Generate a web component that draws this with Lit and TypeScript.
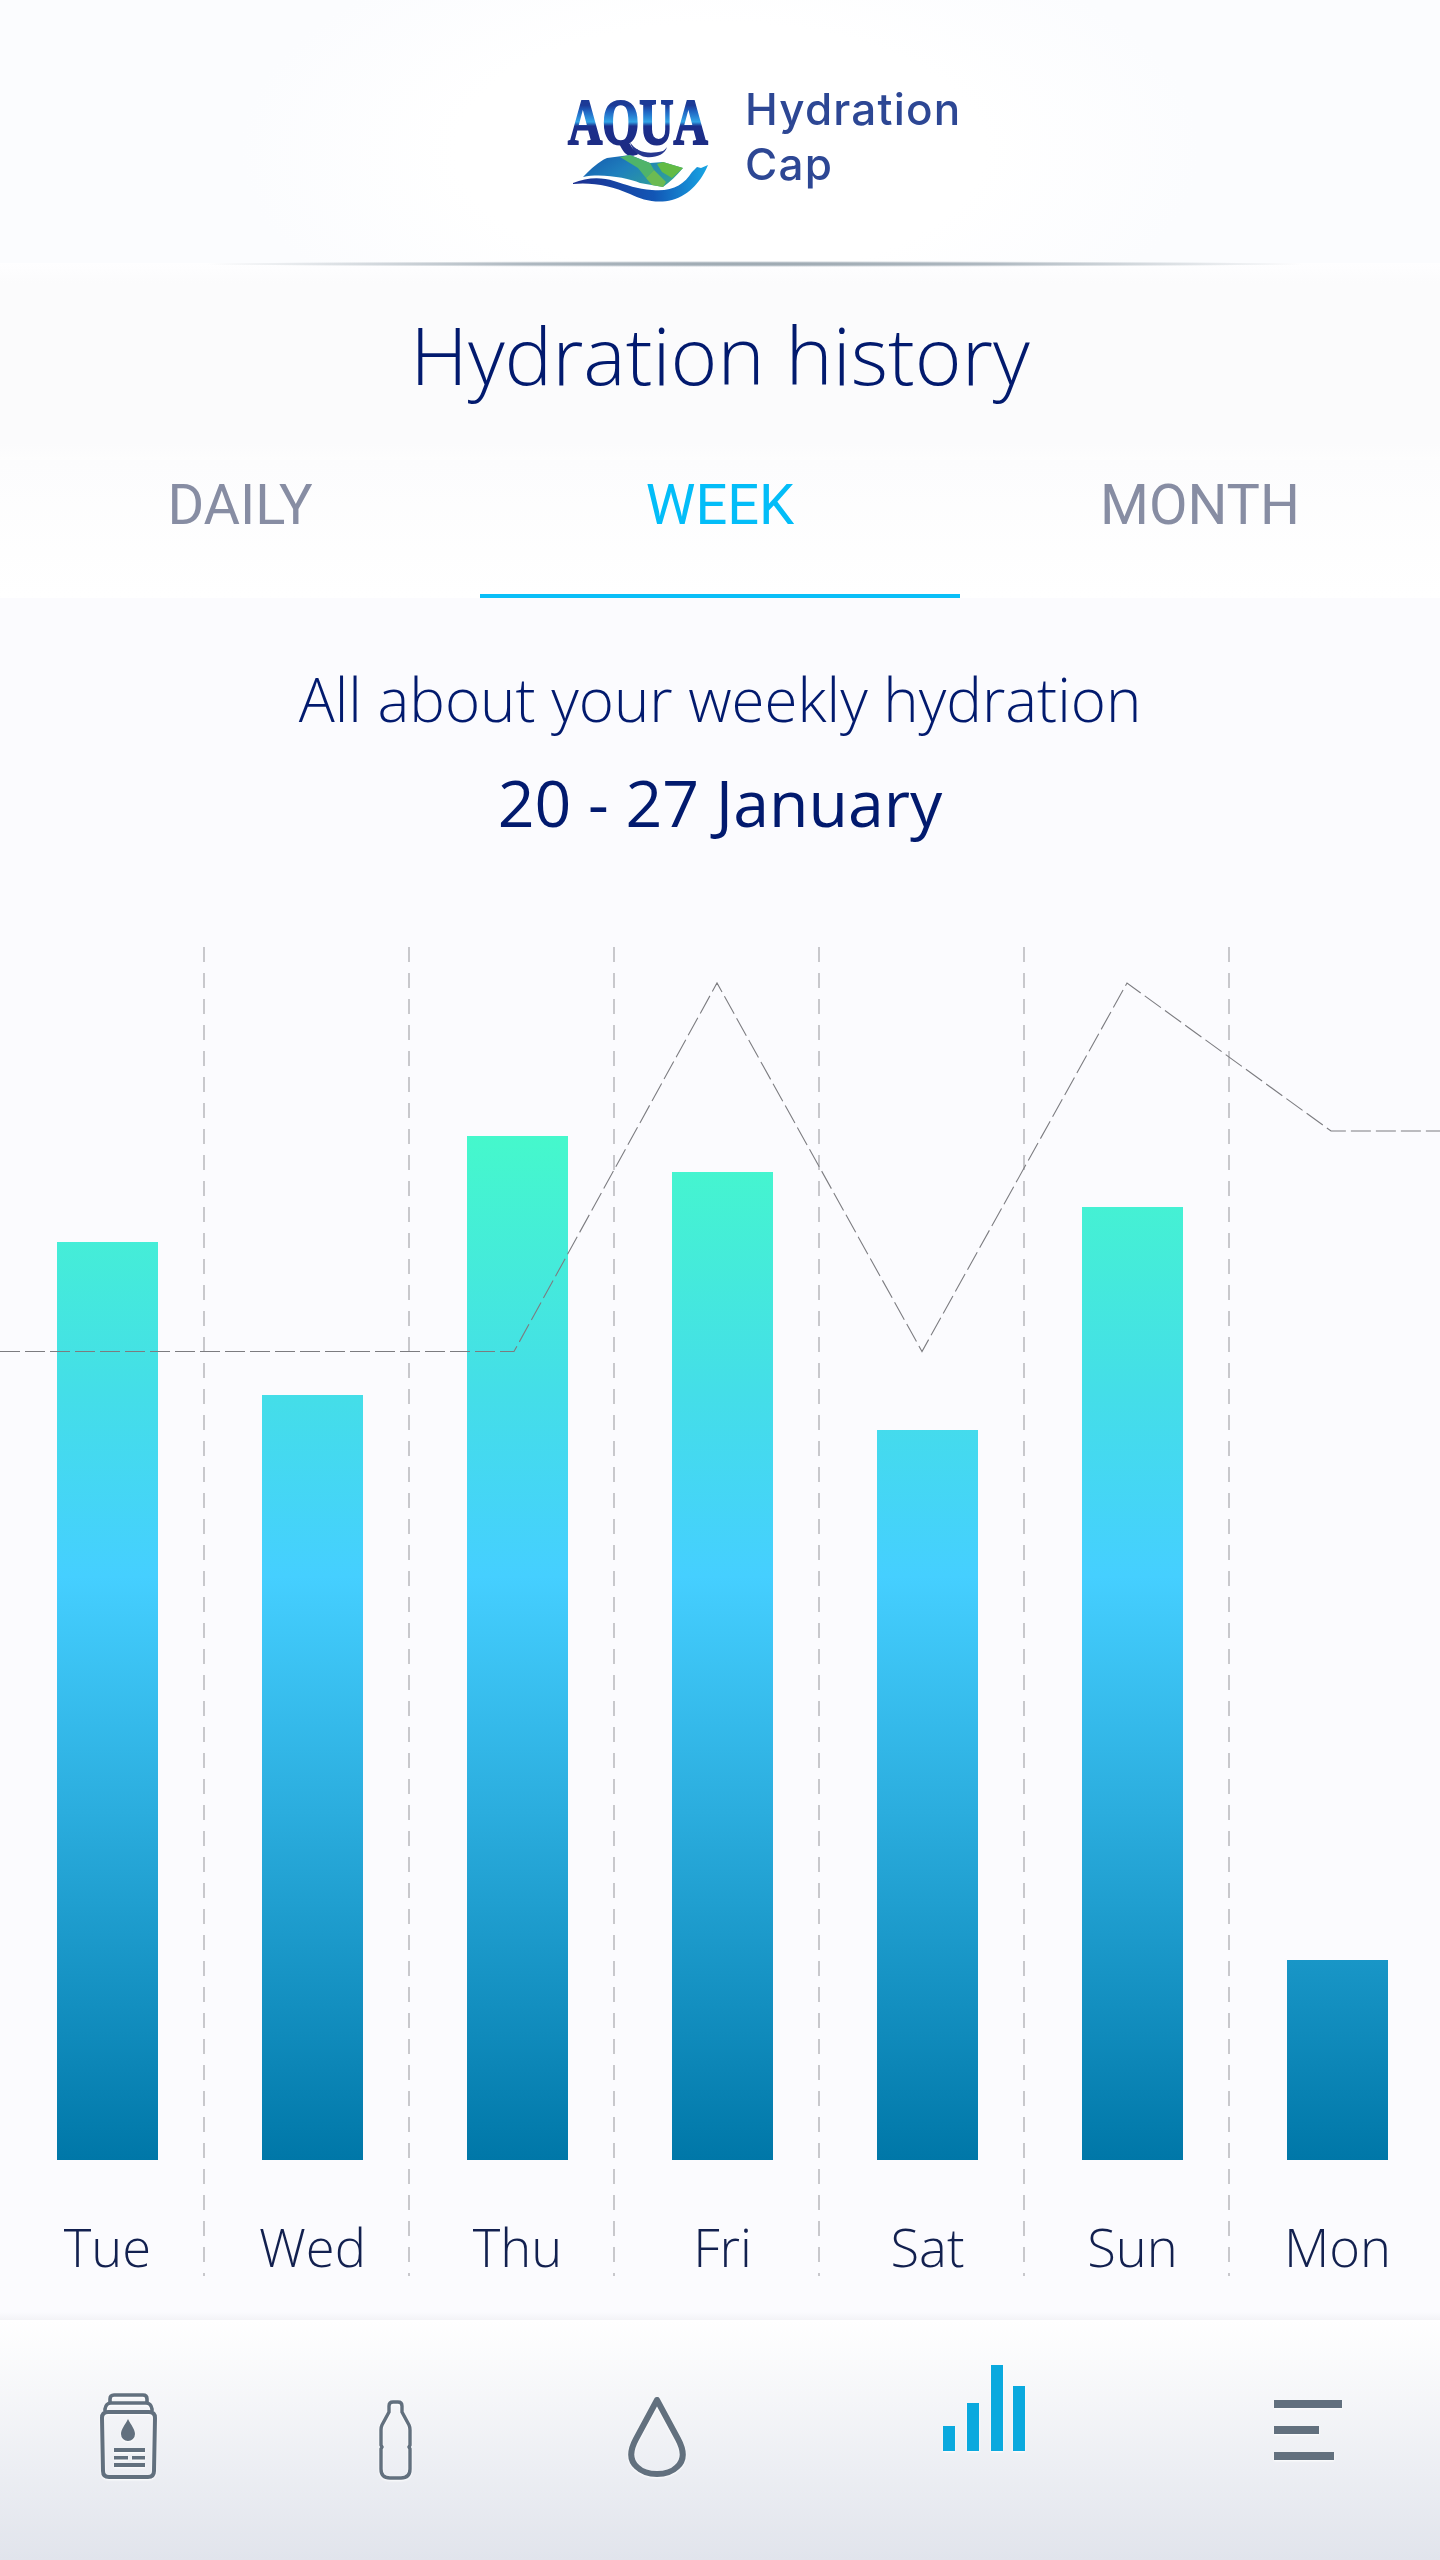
import { LitElement, html, css, svg } from "lit";
import { customElement } from "lit/decorators.js";

const BARS = [
  { d: "Tue", top: 1242 },
  { d: "Wed", top: 1395 },
  { d: "Thu", top: 1136 },
  { d: "Fri", top: 1172 },
  { d: "Sat", top: 1430 },
  { d: "Sun", top: 1207 },
  { d: "Mon", top: 1960 },
];
const BOTTOM = 2160;

@customElement("app-root")
export class AppRoot extends LitElement {
  static styles = css`
    :host { display: block; width: 1440px; height: 2560px; overflow: hidden; background: #fbfbfe; font-family: "Open Sans", sans-serif; color: #021a6e; }
    .page { display: flex; flex-direction: column; height: 2560px; }
    .header { height: 263px; box-sizing: border-box; flex: none; position: relative; display: flex; align-items: flex-start; padding: 82px 0 0 562px;
      background: radial-gradient(ellipse 480px 230px at 720px 150px, #ffffff 55%, #fbfcfe 100%); }
    .mark { margin-top: 8px; flex: none; filter: blur(0.7px); }
    .brand { margin-left: 31px; font-family: Inter, Lato, sans-serif; font-weight: 500; font-size: 44px; line-height: 55px; letter-spacing: 1.2px; color: #2d4794; filter: blur(0.4px); }
    .rule { position: absolute; left: 200px; width: 1110px; bottom: -4px; height: 6px;
      background: radial-gradient(closest-side, #98a4ac 0%, #aeb8c0 45%, rgba(200,208,214,0) 100%); }
    .title { flex: none; height: 197px; margin: 0; display: flex; justify-content: center; font-weight: 300; font-size: 80px; line-height: 182px; color: #021a6e;
      background: linear-gradient(#fefeff 0, #fbfbfc 20px, #fbfbfc 180px, #fdfdfd 197px); }
    .tabs { flex: none; display: grid; grid-template-columns: repeat(3, 1fr); height: 138px; box-sizing: border-box; background: linear-gradient(#fcfcfd, #ffffff); }
    .tab { font-family: Roboto, sans-serif; font-size: 56px; line-height: 70px; padding-top: 10px; text-align: center; color: #878da3; box-sizing: border-box; }
    .tab.on { color: #03bdf8; border-bottom: 4px solid #0abff8; }
    .sub { flex: none; margin: 0; padding-top: 61px; text-align: center; font-weight: 300; font-size: 60px; line-height: 80px; color: #021a6e; }
    .date { flex: none; margin: 0; padding-top: 19px; text-align: center; font-weight: 400; font-size: 64.4px; line-height: 88px; color: #021a6e; }
    .chart { flex: none; position: relative; margin: 101px 0 44px 5px; height: 1329px; display: grid; grid-template-columns: repeat(7, 205px); width: 1435px; }
    .col { position: relative; display: flex; flex-direction: column; align-items: center; min-height: 0; }
    .bars { flex: 1; display: flex; align-items: flex-end; }
    .bar { width: 101px; background-image: linear-gradient(#45f8cc 0%, #44dee8 25%, #45cfff 43%, #2badde 66%, #0077a8 100%); background-size: 100% 1024px; background-position: bottom; background-repeat: no-repeat; }
    .day { flex: none; height: 116px; padding-top: 55px; box-sizing: border-box; font-weight: 300; font-size: 52.5px; line-height: 64px; color: #12204f; }
    .overlay { position: absolute; left: -5px; top: 0; width: 1440px; height: 1329px; pointer-events: none; }
    .nav { flex: 1; position: relative; display: flex; align-items: flex-start; padding-left: 98px; background: linear-gradient(#ffffff, #e1e4ec); }
    .navshade { position: absolute; left: 0; right: 0; top: -8px; height: 8px; background: linear-gradient(rgba(243,243,246,0), #f3f3f6); }
    .nav svg { flex: none; filter: drop-shadow(0 1px 1px #ffffff); }
    .i1 { margin-top: 72px; }
    .i2 { margin: 78px 0 0 217px; }
    .i3 { margin: 75px 0 0 211px; }
    .i4 { margin: 45px 0 0 254px; }
    .i5 { margin: 80px 0 0 249px; }
  `;

  render() {
    const v = [204, 409, 614, 819, 1024, 1229];
    return html`<div class="page">
      <div class="header">
        <svg class="mark" width="152" height="120" viewBox="0 0 152 120">
          <defs>
            <linearGradient id="aq" x1="0" y1="-28" x2="0" y2="2" gradientUnits="userSpaceOnUse"><stop offset="0" stop-color="#1c3a96"/><stop offset=".14" stop-color="#1f62c0"/><stop offset=".4" stop-color="#32a5e8"/><stop offset=".5" stop-color="#1b2f8c"/><stop offset="1" stop-color="#1d2c84"/></linearGradient>
            <linearGradient id="mt" x1="0" y1="0" x2="1" y2="0.5"><stop offset="0" stop-color="#1458ad"/><stop offset=".5" stop-color="#1f80bd"/><stop offset="1" stop-color="#2f9f9a"/></linearGradient>
            <linearGradient id="wv" x1="0" y1="0" x2="1" y2="0"><stop offset="0" stop-color="#1c2f90"/><stop offset=".6" stop-color="#1256b5"/><stop offset="1" stop-color="#18a6e4"/></linearGradient>
          </defs>
          <text transform="translate(76 54) scale(1 1.38)" text-anchor="middle" font-family="Liberation Serif" font-weight="700" font-size="47.5" fill="url(#aq)" stroke="url(#aq)" stroke-width="1.5">AQUA</text>
          <path d="M68 52c6 10 18 13 33 9c2-1 3-3 4-4c-2 8-12 11-21 10c-8-1-14-7-16-15z" fill="#26378f"/>
          <path d="M21 87C30 78 36 72 45 68L68 65L88 73L101 72L121 78C114 86 108 92 101 97L78 93C66 88 40 83 21 87z" fill="url(#mt)"/>
          <path d="M58 67L68 65L88 73L92 80L84 88L76 78z" fill="#4fb46a"/>
          <path d="M95 74L101 72L121 78L110 88L100 82z" fill="#62bb45"/>
          <path d="M84 88L92 80L104 92L101 97L90 95z" fill="#6cbb52"/>
          <path d="M11 93C25 87 40 87 52 91C65 95 75 99 90 100C110 102 122 95 130 82L135 77L139 78L146 75C140 90 128 105 110 110C95 114 80 110 68 104C50 96 30 92 11 94z" fill="url(#wv)"/>
        </svg>
        <div class="brand">Hydration<br>Cap</div>
        <div class="rule"></div>
      </div>
      <h1 class="title">Hydration history</h1>
      <div class="tabs">
        <div class="tab">DAILY</div>
        <div class="tab on">WEEK</div>
        <div class="tab">MONTH</div>
      </div>
      <p class="sub">All about your weekly hydration</p>
      <p class="date">20 - 27 January</p>
      <div class="chart">
        ${BARS.map(b => html`<div class="col"><div class="bars"><div class="bar" style="height:${BOTTOM - b.top}px"></div></div><div class="day">${b.d}</div></div>`)}
        <svg class="overlay" viewBox="0 0 1440 1329">
          ${v.map(x => svg`<line x1=${x} x2=${x} y1="0" y2="1329" stroke="#c8c8cc" stroke-width="2" stroke-dasharray="15 11"/>`)}
          <polyline points="0,404.5 514,404.5 717,36 922,404.5 1127,36 1331,184 1440,184" fill="none" stroke="#7c7c80" stroke-width="1.1" stroke-dasharray="20 5"/>
        </svg>
      </div>
      <div class="nav">
        <div class="navshade"></div>
        <svg class="i1" width="62" height="90" viewBox="0 0 62 90" fill="none" stroke="#62707e" stroke-width="3.6">
          <path d="M12 10V7Q12 3 16 3H45Q49 3 49 7V10"/>
          <path d="M7 19V17Q8 11 13 11H48Q53 11 54 17V19"/>
          <path d="M10 20H51Q57 20 57 26L56 79Q56 85 50 85H11Q5 85 5 79L4 26Q4 20 10 20z" stroke-width="4"/>
          <path d="M30 27C33 33 37 37 37 42A7 7 0 0 1 23 42C23 37 27 33 30 27z" fill="#62707e" stroke="none"/>
          <g fill="#62707e" stroke="none">
            <rect x="16" y="56" width="31" height="4"/>
            <rect x="16" y="64" width="14" height="3.5"/>
            <rect x="34" y="64" width="13" height="3.5"/>
            <rect x="16" y="71" width="31" height="4"/>
          </g>
        </svg>
        <svg class="i2" width="37" height="84" viewBox="0 0 37 84" fill="none" stroke="#62707e" stroke-width="3.4">
          <path d="M12 8Q12 4 16 4H21Q25 4 25 8V14L32 27Q33 29 33 32V47L32 49L33 51V71Q33 80 24 80H13Q4 80 4 71V51L5 49L4 47V32Q4 29 5 27L12 14z"/>
        </svg>
        <svg class="i3" width="64" height="84" viewBox="0 0 64 84" fill="none" stroke="#62707e" stroke-width="6" stroke-linejoin="round">
          <path d="M32 5L11 44C4 57 5 66 12 72C17 77 24 79 32 79C40 79 47 77 52 72C59 66 60 57 53 44z"/>
        </svg>
        <svg class="i4" width="82" height="86" viewBox="0 0 82 86" fill="#0aa9de">
          <rect x="0" y="61" width="12" height="25"/><rect x="24" y="38" width="12" height="48"/><rect x="48" y="0" width="12" height="86"/><rect x="70" y="21" width="12" height="65"/>
        </svg>
        <svg class="i5" width="68" height="60" viewBox="0 0 68 60" fill="#62707e">
          <rect x="0" y="0" width="68" height="8"/><rect x="0" y="26" width="45" height="8"/><rect x="0" y="52" width="60" height="8"/>
        </svg>
      </div>
    </div>`;
  }
}
